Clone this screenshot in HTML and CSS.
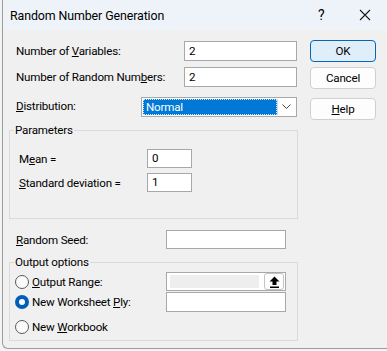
FILE: index.html
```html
<!DOCTYPE html>
<html lang="en">
<head>
  <meta charset="UTF-8">
  <title>Random Number Generation</title>
  <link rel="stylesheet" href="styles.css">
</head>
<body>
  <div class="dialog">
    <div class="titlebar">
      <span class="title">Random Number Generation</span>
      <span class="help-q">?</span>
      <span class="close">
        <svg width="12" height="12" viewBox="0 0 12 12"><path d="M1 1 L11 11 M11 1 L1 11" stroke="#1a1a1a" stroke-width="1.1" fill="none"/></svg>
      </span>
    </div>

    <div class="content">
      <div class="main">
        <div class="row row-vars">
          <label class="lbl">Number of <u>V</u>ariables:</label>
          <div class="field w-top">2</div>
        </div>
        <div class="row row-nums">
          <label class="lbl">Number of Random Num<u>b</u>ers:</label>
          <div class="field w-top">2</div>
        </div>
        <div class="row row-dist">
          <label class="lbl lbl-dist"><u>D</u>istribution:</label>
          <div class="select">
            <span class="sel-value">Normal</span>
            <span class="sel-arrow">
              <svg width="9" height="6" viewBox="0 0 9 6"><path d="M0.5 0.5 L4.5 4.5 L8.5 0.5" stroke="#444" stroke-width="1" fill="none"/></svg>
            </span>
          </div>
        </div>

        <fieldset class="group group-params">
          <legend>Parameters</legend>
          <div class="row row-mean">
            <label class="lbl lbl-inner">M<u>e</u>an =</label>
            <div class="field w-small">0</div>
          </div>
          <div class="row row-std">
            <label class="lbl lbl-inner"><u>S</u>tandard deviation =</label>
            <div class="field w-small">1</div>
          </div>
        </fieldset>

        <div class="row row-seed">
          <label class="lbl lbl-seed"><u>R</u>andom Seed:</label>
          <div class="field w-wide"></div>
        </div>

        <fieldset class="group group-output">
          <legend>Output options</legend>
          <div class="row row-range">
            <span class="radio"></span>
            <label class="lbl lbl-radio"><u>O</u>utput Range:</label>
            <div class="field w-wide range">
              <span class="range-fill"></span>
              <span class="range-btn">
                <svg width="11" height="12" viewBox="0 0 11 12"><path d="M5.5 0.5 L10.5 5.5 L7.5 5.5 L7.5 9 L3.5 9 L3.5 5.5 L0.5 5.5 Z" fill="#000"/><rect x="1" y="10.5" width="9" height="1.5" fill="#000"/></svg>
              </span>
            </div>
          </div>
          <div class="row row-ply">
            <span class="radio checked"></span>
            <label class="lbl lbl-radio">New Worksheet <u>P</u>ly:</label>
            <div class="field w-wide"></div>
          </div>
          <div class="row row-book">
            <span class="radio"></span>
            <label class="lbl lbl-radio">New <u>W</u>orkbook</label>
          </div>
        </fieldset>
      </div>

      <div class="buttons">
        <button class="btn btn-default">OK</button>
        <button class="btn">Cancel</button>
        <button class="btn btn-help"><u>H</u>elp</button>
      </div>
    </div>
  </div>
</body>
</html>
```

FILE: styles.css
```css
body {
  margin: 0;
  background: #f3f3f3;
  font-family: Roboto, "Noto Sans", sans-serif;
  font-size: 11.6px;
  letter-spacing: -0.2px;
  color: #000;
}
.dialog {
  margin-left: 2px;
  height: 348px;
  border-left: 1px solid #9c9c9c;
  border-bottom: 1px solid #9c9c9c;
  border-bottom-left-radius: 6px;
  background: #f0f0f0;
  overflow: hidden;
}
.titlebar {
  height: 30px;
  display: flex;
  align-items: center;
  background: #eef3f9;
  padding-left: 7px;
}
.title {
  font-size: 12.4px;
  letter-spacing: -0.1px;
  flex: 1;
}
.help-q {
  width: 16px;
  margin-right: 25px;
  font-size: 14px;
}
.close {
  width: 12px;
  margin-right: 16px;
  display: flex;
}
.content {
  display: flex;
  padding-left: 6px;
}
.main {
  width: 289px;
}
.row {
  display: flex;
  align-items: center;
  height: 20px;
}
.lbl {
  padding-left: 7px;
  white-space: nowrap;
}
.row-vars { margin-top: 11px; }
.row-nums { margin-top: 6px; }
.row-dist { margin-top: 10px; }
.row-vars .lbl, .row-nums .lbl { width: 168px; }
.lbl-dist { width: 125px; margin-top: -3px; }
.field {
  box-sizing: border-box;
  height: 20px;
  background: #fff;
  border: 1px solid #a8a8a8;
  padding: 0 4px;
  line-height: 18px;
}
.w-top { width: 113px; }
.w-small { width: 45px; height: 19px; line-height: 17px; }
.w-wide { width: 120px; height: 19px; }
.select {
  box-sizing: border-box;
  width: 156px;
  height: 20px;
  border: 1px solid #a8a8a8;
  background: #fff;
  display: flex;
  padding: 1px;
}
.sel-value {
  flex: 1;
  background: #0078d7;
  color: #fff;
  outline: 1px dotted #cfe3f7;
  outline-offset: -1px;
  padding-left: 3px;
  line-height: 16px;
}
.sel-arrow {
  width: 17px;
  border-left: 1px solid #d8d8d8;
  display: flex;
  align-items: center;
  justify-content: center;
}
.group {
  box-sizing: border-box;
  width: 289px;
  margin: 0;
  border: 1px solid #dadada;
  padding: 0;
}
.group legend {
  padding: 0 1px;
  margin-left: 4px;
  line-height: 14px;
}
.group-params {
  margin-top: 6px;
  height: 96px;
}
.row-mean { margin-top: 12px; height: 19px; }
.row-std { margin-top: 5px; height: 19px; }
.lbl-inner { padding-left: 9px; width: 128px; }
.row-seed { margin-top: 11px; height: 19px; }
.lbl-seed { width: 150px; }
.group-output {
  margin-top: 6px;
  height: 86px;
}
.row-range { margin-top: 3px; height: 19px; }
.row-ply { margin-top: 1px; height: 20px; }
.row-book { margin-top: 5px; }
.radio {
  box-sizing: border-box;
  width: 14px;
  height: 14px;
  border: 1px solid #5a5a5a;
  border-radius: 50%;
  margin-left: 5px;
  background: #fafafa;
}
.radio.checked {
  border: 4px solid #005fb8;
  background: #fff;
}
.lbl-radio {
  padding-left: 3px;
  width: 134px;
}
.row-ply .field { height: 20px; }
.range {
  display: flex;
  align-items: center;
  padding: 0 1px 0 3px;
}
.range-fill {
  width: 89px;
  height: 13px;
  background: #eeeeee;
}
.range-btn {
  box-sizing: border-box;
  margin-left: auto;
  width: 20px;
  height: 17px;
  border: 1px solid #c4c4c4;
  border-radius: 3px;
  background: #fdfdfd;
  display: flex;
  align-items: center;
  justify-content: center;
}
.buttons {
  display: flex;
  flex-direction: column;
  margin-left: 12px;
  padding-top: 10px;
}
.btn {
  box-sizing: border-box;
  width: 66px;
  height: 22px;
  font-family: inherit;
  font-size: 11.6px;
  letter-spacing: -0.2px;
  background: #fdfdfd;
  border: 1px solid #d0d0d0;
  border-radius: 4px;
  padding: 0;
  margin-bottom: 5px;
  color: #000;
}
.btn-default {
  background: #e0eef9;
  border: 1px solid #0067c0;
}
.btn-help { margin-top: 4px; }
```
